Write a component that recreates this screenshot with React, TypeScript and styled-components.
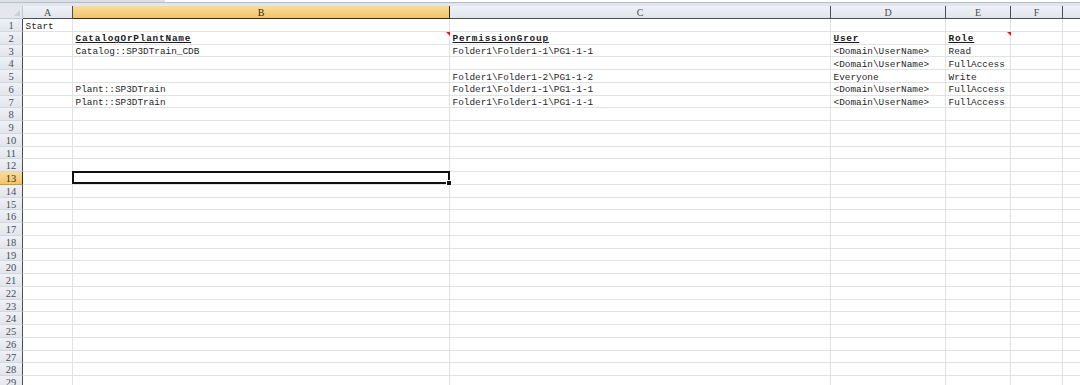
import React from "react";
import styled, { createGlobalStyle, css } from "styled-components";

const GlobalStyle = createGlobalStyle`
  html, body { margin: 0; padding: 0; background: #ffffff; overflow: hidden; }
  body { font-family: "Liberation Mono", "DejaVu Sans Mono", monospace; }
`;

const COLS = ["A", "B", "C", "D", "E", "F", "G"];
const WIDTHS = [50, 377, 381, 115, 65, 52, 40];
const ROW_H = 12.75;

type CellData = { text: string; bold?: boolean; comment?: boolean };
const DATA: Record<number, Record<string, CellData>> = {
  1: { A: { text: "Start" } },
  2: {
    B: { text: "CatalogOrPlantName", bold: true, comment: true },
    C: { text: "PermissionGroup", bold: true },
    D: { text: "User", bold: true },
    E: { text: "Role", bold: true, comment: true },
  },
  3: {
    B: { text: "Catalog::SP3DTrain_CDB" },
    C: { text: "Folder1\\Folder1-1\\PG1-1-1" },
    D: { text: "<Domain\\UserName>" },
    E: { text: "Read" },
  },
  4: { D: { text: "<Domain\\UserName>" }, E: { text: "FullAccess" } },
  5: {
    C: { text: "Folder1\\Folder1-2\\PG1-1-2" },
    D: { text: "Everyone" },
    E: { text: "Write" },
  },
  6: {
    B: { text: "Plant::SP3DTrain" },
    C: { text: "Folder1\\Folder1-1\\PG1-1-1" },
    D: { text: "<Domain\\UserName>" },
    E: { text: "FullAccess" },
  },
  7: {
    B: { text: "Plant::SP3DTrain" },
    C: { text: "Folder1\\Folder1-1\\PG1-1-1" },
    D: { text: "<Domain\\UserName>" },
    E: { text: "FullAccess" },
  },
};

const SEL_ROW = 13;
const SEL_COL = "B";

const TopEdge = styled.div`
  height: 2px;
  display: flex;
  border-bottom: 1px solid #b8bec6;
  & > span:first-child { width: 165px; background: #dcdfe3; }
  & > span:last-child { flex: 1; background: #ffffff; }
`;

const TopBand = styled.div`
  height: 3px;
  background: #e2e6eb;
`;

const Sheet = styled.div`
  display: grid;
  grid-template-columns: 23px ${WIDTHS.map((w) => `${w}px`).join(" ")};
  grid-template-rows: 13px repeat(29, ${ROW_H}px);
`;

const headBase = css<{ $active?: boolean }>`
  box-sizing: border-box;
  font-family: "Liberation Serif", "DejaVu Serif", serif;
  font-size: 10px;
  line-height: 13px;
  text-align: center;
  color: #4a4f57;
  overflow: hidden;
  ${(p) =>
    p.$active
      ? css`
          background: linear-gradient(#f9dc9e, #f2c46a);
          border-color: #c29b4a;
          color: #3b2c10;
        `
      : css`
          background: linear-gradient(#eef1f5, #e2e6ec);
          border-color: #c3c9d1;
        `}
`;

const Corner = styled.div`
  box-sizing: border-box;
  background: #e4e8ee;
  border-right: 1px solid #c3c9d1;
  border-bottom: 1px solid #c3c9d1;
  position: relative;
  &::after {
    content: "";
    position: absolute;
    right: 2px;
    bottom: 2px;
    border-left: 6px solid transparent;
    border-bottom: 6px solid #cbd0d7;
  }
`;

const ColHead = styled.div<{ $active?: boolean }>`
  ${headBase};
  border-right: 1px solid;
  border-bottom: 1px solid;
`;

const RowHead = styled.div<{ $active?: boolean }>`
  ${headBase};
  border-right: 1px solid;
  border-bottom: 1px solid #d3d8de;
  font-size: 10.5px;
  line-height: 14px;
  ${(p) => (p.$active ? "border-bottom-color: #c29b4a;" : "")}
`;

const Cell = styled.div<{ $bold?: boolean; $selected?: boolean }>`
  box-sizing: border-box;
  position: relative;
  border-right: 1px solid #e0e2e4;
  border-bottom: 1px solid #e0e2e4;
  padding: 1.5px 0 0 2.5px;
  font-size: 9.4px;
  line-height: 12px;
  color: #262626;
  white-space: nowrap;
  ${(p) =>
    p.$bold &&
    css`
      font-weight: bold;
      letter-spacing: 0.8px;
      text-decoration: underline;
      text-underline-offset: 1px;
      color: #1a1a1a;
    `}
  ${(p) =>
    p.$selected &&
    css`
      &::after {
        content: "";
        position: absolute;
        left: -1px;
        top: -1px;
        right: -1px;
        bottom: 0;
        border: 2px solid #111111;
        z-index: 2;
      }
      &::before {
        content: "";
        position: absolute;
        right: -3px;
        bottom: -2px;
        width: 4px;
        height: 4px;
        background: #111111;
        border: 1px solid #ffffff;
        z-index: 3;
      }
    `}
`;

const CommentMark = styled.span`
  position: absolute;
  top: 0;
  right: -1px;
  width: 0;
  height: 0;
  border-left: 4px solid transparent;
  border-top: 4px solid #e8191a;
  z-index: 1;
`;

export default function App() {
  const rows = Array.from({ length: 29 }, (_, i) => i + 1);
  return (
    <>
      <GlobalStyle />
      <TopEdge>
        <span />
        <span />
      </TopEdge>
      <TopBand />
      <Sheet>
        <Corner />
        {COLS.map((c) => (
          <ColHead key={c} $active={c === SEL_COL}>
            {c === "G" ? "" : c}
          </ColHead>
        ))}
        {rows.map((r) => (
          <React.Fragment key={r}>
            <RowHead $active={r === SEL_ROW}>{r}</RowHead>
            {COLS.map((c) => {
              const d = DATA[r]?.[c];
              return (
                <Cell
                  key={c}
                  $bold={d?.bold}
                  $selected={r === SEL_ROW && c === SEL_COL}
                >
                  {d?.text}
                  {d?.comment && <CommentMark />}
                </Cell>
              );
            })}
          </React.Fragment>
        ))}
      </Sheet>
    </>
  );
}
